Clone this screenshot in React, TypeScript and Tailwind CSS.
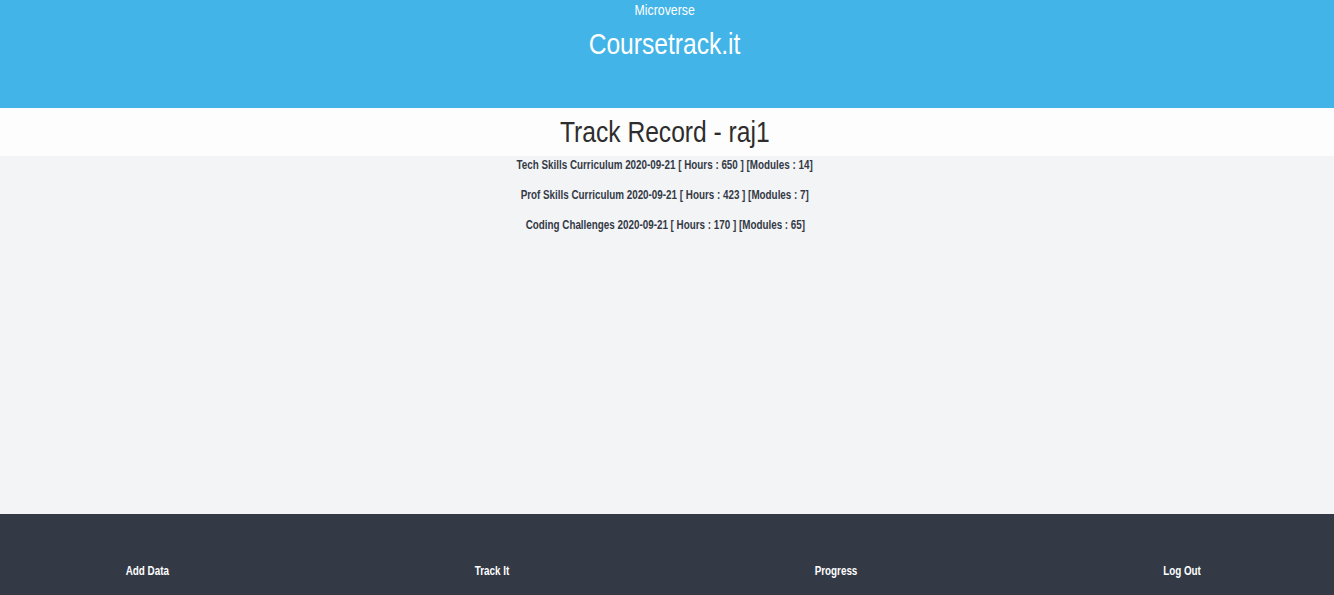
export default function App() {
  const records = [
    "Tech Skills Curriculum 2020-09-21 [ Hours : 650 ] [Modules : 14]",
    "Prof Skills Curriculum 2020-09-21 [ Hours : 423 ] [Modules : 7]",
    "Coding Challenges 2020-09-21 [ Hours : 170 ] [Modules : 65]",
  ];
  // narrow face isn't installed, so Liberation Sans gets squeezed to Arial Narrow width
  const font = { fontFamily: '"Liberation Sans Narrow", "Arial Narrow", "Liberation Sans", Arial, sans-serif' };
  const narrow = "inline-block scale-x-[0.82]";

  return (
    <div className="flex min-h-[595px] flex-col bg-[#f3f4f6]" style={font}>
      {/* Header */}
      <header className="flex h-[108px] flex-col items-center bg-[#42b4e7] pr-[4px] text-white">
        <p className="mt-[1px] text-[15px] leading-[18px]">
          <span className={narrow}>Microverse</span>
        </p>
        <h1 className="mt-[7px] text-[30px] leading-[36px]">
          <span className={narrow}>Coursetrack.it</span>
        </h1>
      </header>

      {/* Title */}
      <div className="flex h-[48px] items-center justify-center bg-[#fdfdfd] pr-[4px]">
        <h2 className="text-[30px] leading-[36px] text-[#2d2d2d]">
          <span className={narrow}>Track Record - raj1</span>
        </h2>
      </div>

      {/* Records */}
      <main className="flex flex-1 flex-col items-center pr-[4px] pt-[1px]">
        {records.map((r) => (
          <p key={r} className="h-[30px] text-[12px] font-bold leading-[17px] text-[#333a46]">
            <span className={narrow}>{r}</span>
          </p>
        ))}
      </main>

      {/* Footer nav */}
      <footer className="flex h-[81px] items-center justify-between bg-[#333a46] pl-[121px] pr-[129px] pt-[33px] text-[12px] font-bold text-white">
        <span className={narrow}>Add Data</span>
        <span className={narrow}>Track It</span>
        <span className={narrow}>Progress</span>
        <span className={narrow}>Log Out</span>
      </footer>
    </div>
  );
}
